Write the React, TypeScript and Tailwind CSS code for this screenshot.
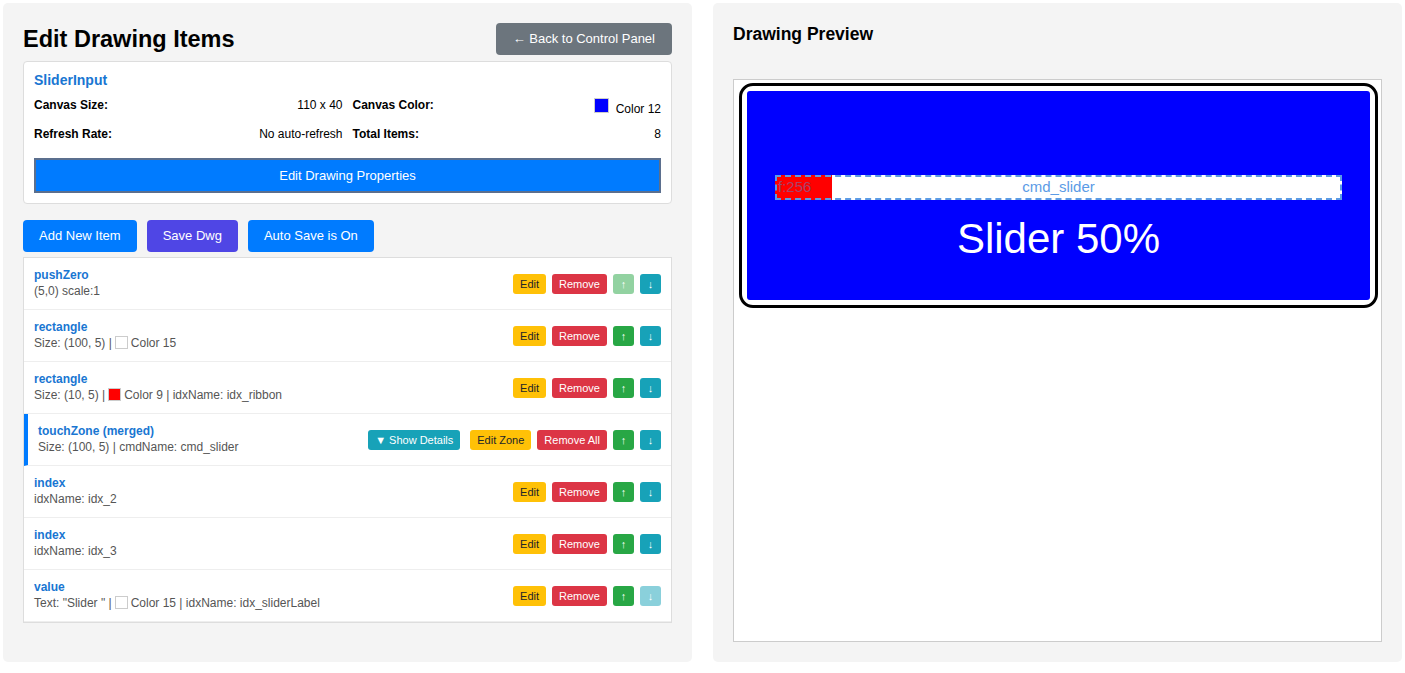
import { ReactNode } from 'react';

type Item = {
  name: string;
  detail: ReactNode;
  merged?: boolean;
  upOff?: boolean;
  downOff?: boolean;
};

const Swatch = ({ color }: { color: string }) => (
  <span
    className="mx-[3px] inline-block h-[13px] w-[13px] border border-[#ccc] align-[-2px]"
    style={{ backgroundColor: color }}
  />
);

const items: Item[] = [
  { name: 'pushZero', detail: '(5,0) scale:1', upOff: true },
  {
    name: 'rectangle',
    detail: (
      <>
        Size: (100, 5) |<Swatch color="#ffffff" />Color 15
      </>
    ),
  },
  {
    name: 'rectangle',
    detail: (
      <>
        Size: (10, 5) |<Swatch color="#ff0000" />Color 9 | idxName: idx_ribbon
      </>
    ),
  },
  { name: 'touchZone (merged)', detail: 'Size: (100, 5) | cmdName: cmd_slider', merged: true },
  { name: 'index', detail: 'idxName: idx_2' },
  { name: 'index', detail: 'idxName: idx_3' },
  {
    name: 'value',
    detail: (
      <>
        Text: "Slider " |<Swatch color="#ffffff" />Color 15 | idxName: idx_sliderLabel
      </>
    ),
    downOff: true,
  },
];

const SmallBtn = ({ children, className }: { children: ReactNode; className: string }) => (
  <button className={`h-[20px] rounded-[3px] px-[7px] text-[11px] leading-[20px] ${className}`}>
    {children}
  </button>
);

const ItemRow = ({ item }: { item: Item }) => (
  <div
    className={`flex items-center justify-between border-b border-[#eee] py-[10px] pr-[10px] ${
      item.merged ? 'border-l-4 border-l-[#007bff] pl-[10px]' : 'pl-[10px]'
    }`}
  >
    <div>
      <div className="text-[12px] leading-[15px] font-bold text-[#1976d2]">{item.name}</div>
      <div className="text-[12px] leading-[16px] text-[#555]">{item.detail}</div>
    </div>
    <div className="flex items-center gap-[6px]">
      {item.merged ? (
        <>
          <SmallBtn className="mr-[4px] bg-[#17a2b8] text-white">▼ Show Details</SmallBtn>
          <SmallBtn className="bg-[#ffc107] text-[#212529]">Edit Zone</SmallBtn>
          <SmallBtn className="bg-[#dc3545] text-white">Remove All</SmallBtn>
        </>
      ) : (
        <>
          <SmallBtn className="bg-[#ffc107] text-[#212529]">Edit</SmallBtn>
          <SmallBtn className="bg-[#dc3545] text-white">Remove</SmallBtn>
        </>
      )}
      <SmallBtn className={`w-[21px] bg-[#28a745] px-0 text-white ${item.upOff ? 'opacity-50' : ''}`}>↑</SmallBtn>
      <SmallBtn className={`w-[21px] bg-[#17a2b8] px-0 text-white ${item.downOff ? 'opacity-50' : ''}`}>↓</SmallBtn>
    </div>
  </div>
);

const App = () => {
  return (
    <div
      className="flex min-h-[673px] items-stretch gap-[21px] bg-white px-[3px] pt-[3px] pb-[11px] text-black"
      style={{ fontFamily: '"Liberation Sans", Arial, sans-serif' }}
    >
      {/* left: items editor */}
      <div className="flex-1 rounded-[5px] bg-[#f4f4f4] p-[20px]">
        <div className="mb-[6px] flex items-center justify-between">
          <h1 className="text-[23.5px] leading-[32px] font-bold">Edit Drawing Items</h1>
          <button className="h-[32px] rounded-[4px] bg-[#6c757d] px-[17px] text-[13px] text-white">
            ← Back to Control Panel
          </button>
        </div>

        <div className="rounded-[4px] border border-[#ddd] bg-white p-[10px]">
          <div className="text-[14px] leading-[16px] font-bold text-[#1976d2]">SliderInput</div>
          <div className="mt-[7px] grid grid-cols-2 gap-x-[10px] gap-y-[9px] text-[12px]">
            <div className="flex h-[20px] items-center justify-between">
              <span className="font-bold">Canvas Size:</span>
              <span>110 x 40</span>
            </div>
            <div className="flex h-[20px] items-center justify-between">
              <span className="font-bold">Canvas Color:</span>
              <span className="flex items-center gap-[7px]">
                <span className="inline-block h-[15px] w-[15px] border border-[#ccc] bg-[#0000ff]" />
                <span className="pt-[7px]">Color 12</span>
              </span>
            </div>
            <div className="flex h-[20px] items-center justify-between">
              <span className="font-bold">Refresh Rate:</span>
              <span>No auto-refresh</span>
            </div>
            <div className="flex h-[20px] items-center justify-between">
              <span className="font-bold">Total Items:</span>
              <span>8</span>
            </div>
          </div>
          <button className="mt-[14px] h-[35px] w-full border-2 border-[#5b6f8e] bg-[#007bff] text-[13px] text-white">
            Edit Drawing Properties
          </button>
        </div>

        <div className="mt-[16px] flex gap-[10px]">
          <button className="h-[32px] rounded-[4px] bg-[#007bff] px-[16px] text-[13px] text-white">Add New Item</button>
          <button className="h-[32px] rounded-[4px] bg-[#4f46e5] px-[16px] text-[13px] text-white">Save Dwg</button>
          <button className="h-[32px] rounded-[4px] bg-[#007bff] px-[16px] text-[13px] text-white">Auto Save is On</button>
        </div>

        <div className="mt-[5px] border border-[#ddd] bg-white">
          {items.map((item, i) => (
            <ItemRow key={i} item={item} />
          ))}
        </div>
      </div>

      {/* right: preview */}
      <div className="flex-1 rounded-[5px] bg-[#f4f4f4] p-[20px]">
        <h2 className="mb-[33px] text-[17.5px] leading-[23px] font-bold">Drawing Preview</h2>
        <div className="h-[563px] border border-[#ccc] bg-white pt-[3px] pr-[3px] pl-[5px]">
          <div className="rounded-[14px] border-[3px] border-black bg-white p-[5px]">
            <div className="flex h-[209px] flex-col items-center rounded-[3px] bg-[#0000ff] px-[28px] pt-[84px]">
              <div className="relative flex h-[25px] w-full items-center bg-white outline-2 outline-offset-[-2px] outline-dashed outline-[#5b9be6]">
                <div className="h-full w-[57px] bg-[#ff0000]" />
                <span className="absolute left-[3px] text-[15px] text-[#a8436a]">f:256</span>
                <span className="absolute inset-x-0 text-center text-[15px] text-[#5b9be6]">cmd_slider</span>
              </div>
              <div className="mt-[15px] text-[42px] leading-[48px] text-white">Slider 50%</div>
            </div>
          </div>
        </div>
      </div>
    </div>
  );
};

export default App;
